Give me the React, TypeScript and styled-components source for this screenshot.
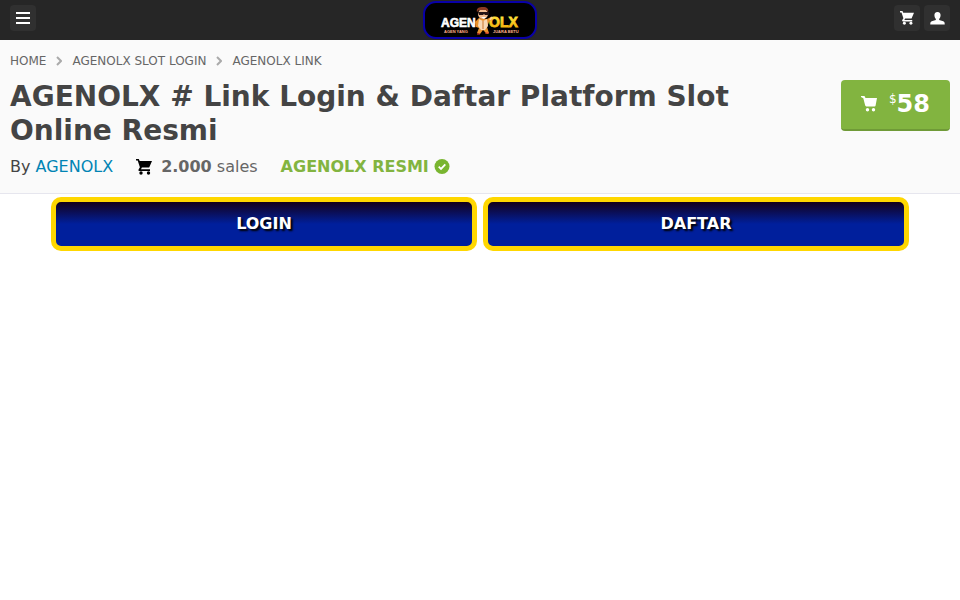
import React from "react";
import styled, { createGlobalStyle } from "styled-components";

const GlobalStyle = createGlobalStyle`
  * {
    box-sizing: border-box;
  }

  body {
    margin: 0;
    background: #fff;
    color: #444;
    font-family: "DejaVu Sans", Verdana, sans-serif;
    font-size: 16px;
    line-height: 24px;
  }

  a {
    color: inherit;
    text-decoration: none;
  }
`;

const TopBar = styled.header`
  display: grid;
  grid-template-columns: 1fr auto 1fr;
  align-items: center;
  height: 40px;
  padding: 0 10px;
  background: #262626;
`;

const Tools = styled.div<{ $end?: boolean }>`
  display: flex;
  gap: 4px;
  justify-content: ${(props) => (props.$end ? "flex-end" : "flex-start")};
  padding-bottom: 4px;
`;

const IconButton = styled.button`
  display: flex;
  align-items: center;
  justify-content: center;
  width: 26px;
  height: 26px;
  padding: 0;
  border: 0;
  border-radius: 4px;
  background: #303030;
  color: #fff;
  cursor: pointer;
`;

const LogoLink = styled.a`
  display: block;
  height: 38px;

  svg {
    display: block;
  }
`;

const ItemHeader = styled.section`
  padding: 10px 10px 14px;
  background: #fafafa;
  border-bottom: 1px solid #e6e6ee;
`;

const Breadcrumbs = styled.nav`
  display: flex;
  align-items: center;
  gap: 10px;
  height: 22px;
  color: #666;
  font-size: 12px;
  line-height: 22px;
`;

const ItemRow = styled.div`
  display: flex;
  align-items: flex-start;
  justify-content: space-between;
  gap: 20px;
  padding-top: 8px;
`;

const Title = styled.h1`
  flex: 1;
  max-width: 760px;
  margin: 0;
  color: #444;
  font-size: 28px;
  font-weight: 700;
  line-height: 34px;
`;

const PriceButton = styled.button`
  display: flex;
  align-items: flex-start;
  height: 51px;
  padding: 9px 20px 0;
  border: 0;
  border-bottom: 2px solid #6f9a37;
  border-radius: 4px;
  background: #82b440;
  color: #fff;
  font-family: inherit;
  cursor: pointer;

  svg {
    margin: 6px 11px 0 0;
  }
`;

const Currency = styled.span`
  font-size: 12px;
  line-height: 20px;
`;

const Amount = styled.span`
  font-size: 24px;
  font-weight: 700;
  line-height: 30px;
`;

const Meta = styled.div`
  display: flex;
  align-items: center;
  margin-top: 7px;
`;

const AuthorLink = styled.a`
  color: #0084b4;
`;

const Sales = styled.span`
  display: flex;
  align-items: center;
  gap: 9px;
  margin: 0 23px;
  color: #666;
`;

const MetaCart = styled.span`
  display: flex;
  color: #000;
`;

const Verified = styled.span`
  display: flex;
  align-items: center;
  gap: 5px;
  color: #82b440;
  font-weight: 700;
`;

const Actions = styled.div`
  display: grid;
  grid-template-columns: 1fr 1fr;
  gap: 6px;
  width: 90%;
  margin: 0 auto;
  padding: 3px;
`;

const ActionLink = styled.a`
  padding: 10px;
  border: 5px solid #ffd700;
  border-radius: 10px;
  background: linear-gradient(to bottom, #14001a 0%, #001f9c 50%);
  color: #fff;
  font-weight: 700;
  text-align: center;
  text-shadow: 2px 2px 2px #000;
`;

const MenuIcon = () => (
  <svg width="14" height="12" viewBox="0 0 14 12" fill="currentColor">
    <path d="M0 0h14v2H0zM0 5h14v2H0zM0 10h14v2H0z" />
  </svg>
);

const UserIcon = () => (
  <svg width="15" height="13" viewBox="0 0 16 14" fill="currentColor">
    <path d="M8 0c2.300 0 3.500 1.500 3.300 3.700-.1 1.700-.7 2.900-1.500 3.800v1.200l4.400 1.200c1.200.5 1.600 1.300 1.600 3.600H.2c0-2.300.4-3.100 1.600-3.600l4.400-1.200V7.500C5.400 6.600 4.800 5.400 4.700 3.700 4.500 1.500 5.700 0 8 0z" />
  </svg>
);

const CartIcon = ({ size = 16 }: { size?: number }) => (
  <svg width={size} height={size} viewBox="0 0 16 16" fill="currentColor">
    <path d="M0 0h2.800l.9 2H16l-2.800 6.600H5.900L5 10.200h9V12H3.500c-1 0-1.300-.8-.9-1.600l1.300-2.200L1.700 1.600H0z" />
    <circle cx="5" cy="14" r="1.700" />
    <circle cx="12.500" cy="14" r="1.700" />
  </svg>
);

const BuyIcon = () => (
  <svg width="17" height="17" viewBox="0 0 17 17" fill="currentColor">
    <path d="M0 1h3.500l1 2H16l-1.400 7.500c-.1.600-.4.900-1 .9H5.300c-.6 0-.9-.3-1.100-.8L2.300 3.200 0 1.900z" />
    <circle cx="6.500" cy="14.800" r="1.700" />
    <circle cx="12.500" cy="14.800" r="1.700" />
  </svg>
);

const ChevronIcon = () => (
  <svg width="6" height="10" viewBox="0 0 6 10" fill="none">
    <path d="M1 1l4 4-4 4" stroke="#aaa" strokeWidth="2" />
  </svg>
);

const CheckIcon = () => (
  <svg width="16" height="16" viewBox="0 0 16 16">
    <circle cx="8" cy="7.500" r="7.500" fill="#79b530" />
    <path
      d="M4.700 7.700L7 9.900l4.300-4.500"
      fill="none"
      stroke="#fff"
      strokeWidth="1.800"
    />
  </svg>
);

const Logo = () => (
  <svg width="114" height="38" viewBox="0 0 114 38" role="img" aria-label="AGENOLX">
    <defs>
      <linearGradient id="gold" x1="0" y1="0" x2="0" y2="1">
        <stop offset="0" stopColor="#fff04a" />
        <stop offset="1" stopColor="#f2a800" />
      </linearGradient>
    </defs>
    <rect x="1" y="1" width="112" height="36" rx="12" fill="#000" stroke="#0900a8" strokeWidth="2" />
    <g fontFamily="'Liberation Sans', sans-serif" fontWeight="700">
      <text x="18" y="26" fontSize="12" fill="#fff" stroke="#fff" strokeWidth="0.600">
        AGEN
      </text>
      <text x="66" y="26" fontSize="14" fill="url(#gold)" stroke="url(#gold)" strokeWidth="0.800">
        OLX
      </text>
      <text x="21" y="32" fontSize="4" fill="#ffb08c">AGEN YANG</text>
      <text x="70" y="32" fontSize="4" fill="#ffb08c">JUARA BETU</text>
    </g>
    {/* mascot */}
    <path d="M56 17l-4 4 1 5 3 1-2 5 3 1 3-4 4 4 2-1-2-6 2-5 3-2-1-3-4 2z" fill="#e8912c" />
    <path d="M56 18l4 2 4-2 1 7-3 4h-4l-3-4z" fill="#f8d8b4" />
    <path d="M60 20v8" stroke="#c9742e" />
    <ellipse cx="60" cy="13" rx="5" ry="5" fill="#f2bd92" />
    <path d="M54 11c-1-4 2-5 6-5s6 2 5 5l-2-2h-7z" fill="#8a3a22" />
    <path d="M55 11h11v3h-4l-1-1-1 1h-4z" fill="#241315" />
    <path d="M58 16h5l-2 2z" fill="#fff" />
    <path d="M67 19l2-3" stroke="#ffd48a" strokeWidth="2" />
    <path d="M54 33h3M62 32h4" stroke="#e43828" />
  </svg>
);

const crumbs = ["HOME", "AGENOLX SLOT LOGIN", "AGENOLX LINK"];

const App = () => {
  return (
    <>
      <GlobalStyle />
      <TopBar>
        <Tools>
          <IconButton aria-label="Menu">
            <MenuIcon />
          </IconButton>
        </Tools>
        <LogoLink href="#">
          <Logo />
        </LogoLink>
        <Tools $end>
          <IconButton aria-label="Cart">
            <CartIcon size={14} />
          </IconButton>
          <IconButton aria-label="Account">
            <UserIcon />
          </IconButton>
        </Tools>
      </TopBar>
      <main>
        <ItemHeader>
          <Breadcrumbs aria-label="Breadcrumb">
            {crumbs.map((crumb, index) => (
              <React.Fragment key={crumb}>
                {index > 0 && <ChevronIcon />}
                <a href="#">{crumb}</a>
              </React.Fragment>
            ))}
          </Breadcrumbs>
          <ItemRow>
            <Title>AGENOLX # Link Login &amp; Daftar Platform Slot Online Resmi</Title>
            <PriceButton>
              <BuyIcon />
              <Currency>$</Currency>
              <Amount>58</Amount>
            </PriceButton>
          </ItemRow>
          <Meta>
            <span>
              By <AuthorLink href="#">AGENOLX</AuthorLink>
            </span>
            <Sales>
              <MetaCart>
                <CartIcon />
              </MetaCart>
              <span>
                <strong>2.000</strong> sales
              </span>
            </Sales>
            <Verified>
              AGENOLX RESMI
              <CheckIcon />
            </Verified>
          </Meta>
        </ItemHeader>
        <Actions>
          <ActionLink href="#">LOGIN</ActionLink>
          <ActionLink href="#">DAFTAR</ActionLink>
        </Actions>
      </main>
    </>
  );
};

export default App;
